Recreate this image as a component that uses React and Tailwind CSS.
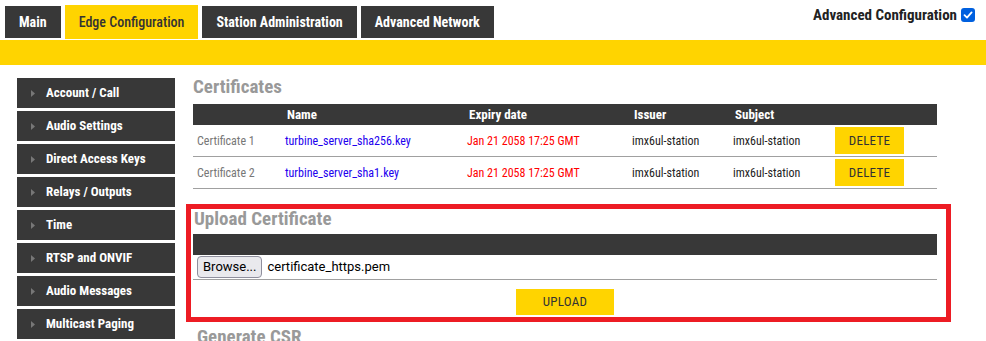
import { useState } from 'react';

const FONT = { fontFamily: '"Roboto Condensed", Roboto, "Liberation Sans", sans-serif' };

const tabs = [
  { label: 'Main', active: false },
  { label: 'Edge Configuration', active: true },
  { label: 'Station Administration', active: false },
  { label: 'Advanced Network', active: false },
];

const menu = [
  'Account / Call',
  'Audio Settings',
  'Direct Access Keys',
  'Relays / Outputs',
  'Time',
  'RTSP and ONVIF',
  'Audio Messages',
  'Multicast Paging',
];

const certificates = [
  { id: 'Certificate 1', name: 'turbine_server_sha256.key' },
  { id: 'Certificate 2', name: 'turbine_server_sha1.key' },
];

const App = () => {
  const [advanced, setAdvanced] = useState(true);

  return (
    <div className="w-[986px] h-[341px] overflow-hidden bg-white" style={FONT}>
      {/* Top tabs */}
      <div className="flex items-end justify-between h-[40px]">
        <div className="flex items-end gap-[4px] pl-[5px] h-full">
          {tabs.map((tab) =>
            tab.active ? (
              <div
                key={tab.label}
                className="h-[34px] mb-[1px] px-[14px] flex items-center bg-[#ffd400] text-[#333] text-[14px] font-medium"
              >
                {tab.label}
              </div>
            ) : (
              <div
                key={tab.label}
                className="h-[32px] mb-[2px] px-[14px] flex items-center bg-[#383838] text-white text-[14px] font-bold"
              >
                {tab.label}
              </div>
            )
          )}
        </div>
        <label className="self-start mt-[4px] mr-[11px] flex items-center gap-[4px] text-[15px] font-bold text-[#222]">
          Advanced Configuration
          <span
            onClick={() => setAdvanced(!advanced)}
            className={`w-[14px] h-[14px] rounded-[3px] flex items-center justify-center ${advanced ? 'bg-[#0060df]' : 'border border-[#8f8f9d] bg-white'}`}
          >
            {advanced && (
              <svg width="10" height="10" viewBox="0 0 10 10">
                <path d="M1.5 5.2 L4 7.6 L8.6 2.4" fill="none" stroke="white" strokeWidth="1.8" strokeLinecap="round" strokeLinejoin="round" />
              </svg>
            )}
          </span>
        </label>
      </div>

      {/* Yellow band */}
      <div className="h-[25px] bg-[#ffd400]"></div>

      <div className="flex pl-[17px]">
        {/* Side menu */}
        <div className="w-[158px] pt-[13px] flex flex-col gap-[3px]">
          {menu.map((item) => (
            <div key={item} className="h-[30px] bg-[#383838] flex items-center text-white text-[13px] font-bold">
              <svg width="4" height="7" viewBox="0 0 4 7" className="ml-[14px] mr-[11px]">
                <path d="M0 0 L4 3.5 L0 7 Z" fill="#777" />
              </svg>
              {item}
            </div>
          ))}
        </div>

        {/* Content */}
        <div className="w-[744px] ml-[18px] pt-[10px]">
          <h2 className="text-[19px] leading-[24px] font-bold text-[#999]">Certificates</h2>

          <div className="mt-[5px] text-[12px]">
            <div className="h-[21px] bg-[#383838] flex items-center text-white text-[13px] font-bold">
              <div className="w-[88px]"></div>
              <div className="w-[182px] pl-[6px]">Name</div>
              <div className="w-[165px] pl-[6px]">Expiry date</div>
              <div className="w-[101px] pl-[6px]">Issuer</div>
              <div className="w-[102px] pl-[6px]">Subject</div>
              <div className="flex-1"></div>
            </div>
            {certificates.map((cert) => (
              <div key={cert.id} className="h-[32px] flex items-center border-b border-[#a0a0a0]">
                <div className="w-[88px] pl-[4px] text-[#777]">{cert.id}</div>
                <div className="w-[182px] pl-[4px] text-[#2200ee]">{cert.name}</div>
                <div className="w-[165px] pl-[4px] text-[#f00]">Jan 21 2058 17:25 GMT</div>
                <div className="w-[101px] pl-[4px] text-[#222]">imx6ul-station</div>
                <div className="w-[102px] pl-[4px] text-[#222]">imx6ul-station</div>
                <div className="flex-1 pl-[4px]">
                  <button className="w-[69px] h-[27px] bg-[#ffd400] text-[#333] text-[13px] tracking-[0.3px]">
                    DELETE
                  </button>
                </div>
              </div>
            ))}
          </div>

          {/* Upload certificate, highlighted */}
          <div className="relative mt-[15px] pt-[3px] pb-[7px]">
            <div className="absolute top-0 bottom-0 -left-[7px] -right-[14px] border-[5px] border-[#ed1c24] pointer-events-none"></div>
            <h2 className="text-[19px] leading-[24px] font-bold text-[#999] pl-[1px]">Upload Certificate</h2>
            <div className="mt-[3px] h-[21px] bg-[#383838]"></div>
            <div className="h-[25px] flex items-center border-b border-[#a0a0a0] pl-[4px]">
              <button className="h-[22px] px-[5px] rounded-[4px] border border-[#8f8f9d] bg-[#e9e9ed] text-[13px] text-black" style={{ fontFamily: 'Roboto, sans-serif' }}>
                Browse...
              </button>
              <span className="ml-[5px] text-[13px] text-black" style={{ fontFamily: 'Roboto, sans-serif' }}>
                certificate_https.pem
              </span>
            </div>
            <div className="pt-[9px] flex justify-center">
              <button className="w-[98px] h-[26px] bg-[#ffd400] text-[#333] text-[13px] tracking-[0.3px]">
                UPLOAD
              </button>
            </div>
          </div>

          <h2 className="mt-[3px] text-[19px] leading-[24px] font-bold text-[#999] pl-[4px]">Generate CSR</h2>
        </div>
      </div>
    </div>
  );
};

export default App;
